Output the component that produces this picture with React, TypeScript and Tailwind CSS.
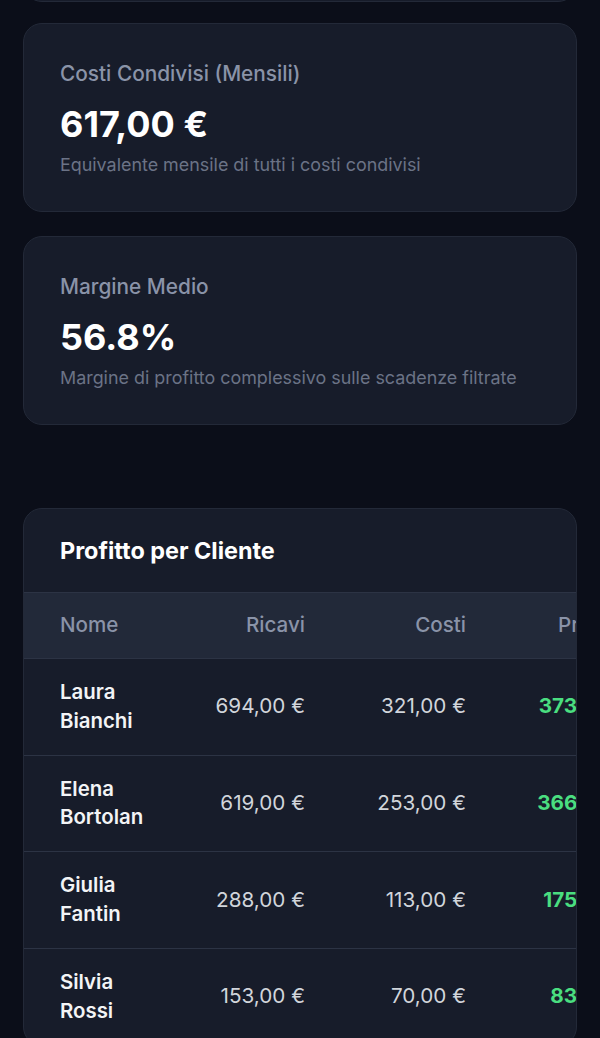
const clients = [
  { first: "Laura", last: "Bianchi", ricavi: "694,00 €", costi: "321,00 €", profitto: "373,00 €", margine: "53.7%" },
  { first: "Elena", last: "Bortolan", ricavi: "619,00 €", costi: "253,00 €", profitto: "366,00 €", margine: "59.1%" },
  { first: "Giulia", last: "Fantin", ricavi: "288,00 €", costi: "113,00 €", profitto: "175,00 €", margine: "60.8%" },
  { first: "Silvia", last: "Rossi", ricavi: "153,00 €", costi: "70,00 €", profitto: "83,00 €", margine: "54.2%" },
];

function StatCard({ title, value, hint }: { title: string; value: string; hint: string }) {
  return (
    <div className="rounded-[19px] border border-[#232938] bg-[#171c2a] px-[36px] pt-[36px] pb-[34px]">
      <p className="text-[20.8px] leading-[28.8px] font-medium text-[#8a93a8]">{title}</p>
      <p className="mt-[14px] text-[36px] leading-[43px] font-bold text-white">{value}</p>
      <p className="mt-[7px] text-[17.9px] leading-[24px] text-[#6b7386]">{hint}</p>
    </div>
  );
}

export default function App() {
  return (
    <div className="min-h-screen overflow-hidden bg-[#0b0e19] px-[23px] pb-10 font-['Inter',sans-serif]">
      {/* card above, scrolled out of view */}
      <div className="-mt-[58px] h-[60px] rounded-[19px] border border-[#232938] bg-[#171c2a]" />

      <div className="mt-[21px] flex flex-col gap-[24px]">
        <StatCard
          title="Costi Condivisi (Mensili)"
          value="617,00 €"
          hint="Equivalente mensile di tutti i costi condivisi"
        />
        <StatCard
          title="Margine Medio"
          value="56.8%"
          hint="Margine di profitto complessivo sulle scadenze filtrate"
        />
      </div>

      <div className="mt-[83px] overflow-hidden rounded-[19px] border border-[#232938] bg-[#171c2a]">
        <h2 className="px-[36px] pt-[25px] pb-[25px] text-[23.4px] leading-[33.6px] font-bold text-white">
          Profitto per Cliente
        </h2>
        <div className="overflow-x-auto [scrollbar-width:none]">
          <table className="w-[792px] table-fixed border-collapse">
            <colgroup>
              <col className="w-[160px]" />
              <col className="w-[157px]" />
              <col className="w-[161px]" />
              <col className="w-[164px]" />
              <col className="w-[150px]" />
            </colgroup>
            <thead>
              <tr className="border-y border-[#2c3344] bg-[#222939] text-[20.6px] leading-[28.8px] text-[#8a93a8]">
                <th className="px-[36px] py-[18px] text-left font-medium">Nome</th>
                <th className="pl-[8px] pr-[36px] py-[18px] text-right font-medium">Ricavi</th>
                <th className="pl-[8px] pr-[36px] py-[18px] text-right font-medium">Costi</th>
                <th className="pl-[8px] pr-[36px] py-[18px] text-right font-medium">Profitto</th>
                <th className="pl-[8px] pr-[36px] py-[18px] text-right font-medium">Margine</th>
              </tr>
            </thead>
            <tbody>
              {clients.map((c) => (
                <tr key={c.last} className="border-b border-[#2c3344] text-[20.7px] leading-[28.8px]">
                  <td className="pl-[36px] pr-[30px] py-[19px] text-[20.4px] font-semibold text-[#f3f4f6]">
                    {c.first} {c.last}
                  </td>
                  <td className="pl-[8px] pr-[36px] py-[19px] text-right whitespace-nowrap text-[#d1d5db]">{c.ricavi}</td>
                  <td className="pl-[8px] pr-[36px] py-[19px] text-right whitespace-nowrap text-[#d1d5db]">{c.costi}</td>
                  <td className="pl-[8px] pr-[36px] py-[19px] text-right whitespace-nowrap font-bold text-[#4ade80]">{c.profitto}</td>
                  <td className="pl-[8px] pr-[36px] py-[19px] text-right whitespace-nowrap text-[#d1d5db]">{c.margine}</td>
                </tr>
              ))}
            </tbody>
          </table>
        </div>
      </div>
    </div>
  );
}
